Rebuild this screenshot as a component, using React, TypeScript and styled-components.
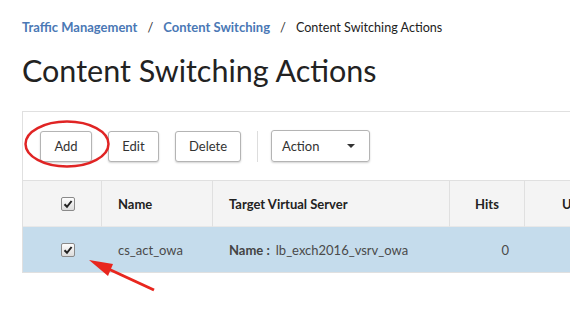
import styled, { createGlobalStyle } from 'styled-components';

const GlobalStyle = createGlobalStyle`
  html, body {
    margin: 0;
    padding: 0;
    background: #fff;
    overflow: hidden;
  }
  body {
    font-family: "Lato", "Open Sans", sans-serif;
    color: #333;
  }
`;

const Page = styled.div`
  position: relative;
  width: 570px;
  height: 334px;
  overflow: hidden;
  padding: 17px 0 0 22px;
  box-sizing: border-box;
`;

const Breadcrumb = styled.nav`
  display: flex;
  align-items: center;
  gap: 9px;
  font-size: 13px;
  height: 20px;
`;

const Crumb = styled.span<{ current?: boolean }>`
  color: ${p => (p.current ? '#222' : '#4a78b5')};
  font-weight: ${p => (p.current ? 400 : 700)};
  font-size: ${p => (p.current ? '12.6px' : '13px')};
`;

const Sep = styled.span`
  color: #333;
  padding: 0 1px;
`;

const Title = styled.h1`
  margin: 13px 0 0;
  font-size: 30.5px;
  font-weight: 400;
  color: #222;
  line-height: 41px;
  height: 41px;
`;

const Panel = styled.section`
  margin-top: 20px;
  width: 620px;
  border-top: 1px solid #e0e0e0;
  border-left: 1px solid #e0e0e0;
`;

const Toolbar = styled.div`
  display: flex;
  align-items: center;
  padding: 18px 0 18px 17px;
  border-bottom: 1px solid #e0e0e0;
`;

const Button = styled.button<{ w: number }>`
  width: ${p => p.w}px;
  height: 31px;
  margin-right: 16px;
  padding: 0;
  border: 1px solid #b4b4b4;
  border-radius: 3px;
  background: #fff;
  box-shadow: 0 1px 2px rgba(0, 0, 0, 0.18);
  font-family: inherit;
  font-size: 13px;
  color: #333;
`;

const Divider = styled.div`
  width: 1px;
  height: 31px;
  background: #ddd;
  margin-right: 13px;
`;

const Select = styled.div`
  display: flex;
  align-items: center;
  justify-content: space-between;
  width: 99px;
  height: 32px;
  box-sizing: border-box;
  padding: 0 14px 0 10px;
  border: 1px solid #b4b4b4;
  border-radius: 3px;
  box-shadow: 0 1px 2px rgba(0, 0, 0, 0.18);
  font-size: 13px;
  color: #333;
`;

const Caret = styled.span`
  width: 0;
  height: 0;
  border-left: 4px solid transparent;
  border-right: 4px solid transparent;
  border-top: 4px solid #333;
`;

const Table = styled.div`
  display: grid;
  grid-template-columns: 79px 111px 237px 75px 1fr;
  font-size: 13px;
`;

const Cell = styled.div<{ head?: boolean; align?: string; last?: boolean }>`
  height: 46px;
  box-sizing: border-box;
  display: flex;
  align-items: center;
  justify-content: ${p => p.align || 'flex-start'};
  padding: 0 16px 0 ${p => (p.last ? '37px' : '16px')};
  background: ${p => (p.head ? '#f4f4f4' : '#c5dcec')};
  border-right: ${p => (p.head && !p.last ? '1px solid #e0e0e0' : 'none')};
  border-bottom: 1px solid ${p => (p.head ? '#e8e8e8' : '#e0e0e0')};
  font-weight: ${p => (p.head ? 700 : 400)};
  color: ${p => (p.head ? '#222' : '#4a4a4a')};
  white-space: nowrap;
`;

const Label = styled.b`
  color: #444;
  margin-right: 6px;
`;

const Box = styled.span`
  display: inline-flex;
  align-items: center;
  justify-content: center;
  width: 12px;
  height: 12px;
  border: 1px solid #8a8a8a;
  border-radius: 2px;
  background: linear-gradient(#fdfdfd, #dcdcdc);
  margin-left: 22px;
`;

const Overlay = styled.svg`
  position: absolute;
  left: 0;
  top: 0;
  pointer-events: none;
`;

function Check() {
  return (
    <Box>
      <svg width="10" height="10" viewBox="0 0 10 10">
        <path d="M1.5 5.2 L4 7.8 L8.6 2" fill="none" stroke="#222" strokeWidth="2" />
      </svg>
    </Box>
  );
}

export default function App() {
  return (
    <>
      <GlobalStyle />
      <Page>
        <Breadcrumb>
          <Crumb>Traffic Management</Crumb>
          <Sep>/</Sep>
          <Crumb>Content Switching</Crumb>
          <Sep>/</Sep>
          <Crumb current>Content Switching Actions</Crumb>
        </Breadcrumb>
        <Title>Content Switching Actions</Title>
        <Panel>
          <Toolbar>
            <Button w={52}>Add</Button>
            <Button w={51}>Edit</Button>
            <Button w={66}>Delete</Button>
            <Divider />
            <Select>
              Action
              <Caret />
            </Select>
          </Toolbar>
          <Table>
            <Cell head><Check /></Cell>
            <Cell head>Name</Cell>
            <Cell head>Target Virtual Server</Cell>
            <Cell head align="center">Hits</Cell>
            <Cell head last>U</Cell>
            <Cell><Check /></Cell>
            <Cell>cs_act_owa</Cell>
            <Cell><Label>Name :</Label>lb_exch2016_vsrv_owa</Cell>
            <Cell align="flex-end">0</Cell>
            <Cell last />
          </Table>
        </Panel>
        <Overlay width="570" height="334">
          <ellipse cx="67" cy="144" rx="41.5" ry="22.5" fill="none" stroke="#e02424" strokeWidth="2.5" />
          <line x1="154" y1="290" x2="102" y2="266" stroke="#e8261e" strokeWidth="3" />
          <polygon points="89,260 113,264 108,276" fill="#e8261e" />
        </Overlay>
      </Page>
    </>
  );
}
